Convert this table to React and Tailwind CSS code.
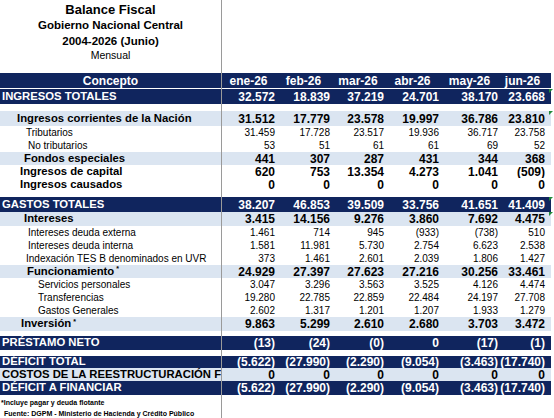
import React from "react";

const cols = [
  "w-[55px] pr-[2px]",
  "w-[55px] pr-[2px]",
  "w-[54px] pr-[2px]",
  "w-[55px] pr-[2px]",
  "w-[59px] pr-[2px]",
  "w-[51px] pr-[6px]",
];

const heads = ["ene-26", "feb-26", "mar-26", "abr-26", "may-26", "jun-26"];

const zeros = ["0", "0", "0", "0", "0", "0"];
const deficit = ["(5.622)", "(27.990)", "(2.290)", "(9.054)", "(3.463)", "(17.740)"];

const rows = [
  { k: "navy", label: "INGRESOS TOTALES", v: ["32.572", "18.839", "37.219", "24.701", "38.170", "23.668"], h: "h-[15px]", pad: "pl-[2px]", flag: true },
  { k: "gap", h: "h-[7px]" },
  { k: "light", label: "Ingresos corrientes de la Nación", v: ["31.512", "17.779", "23.578", "19.997", "36.786", "23.810"], h: "h-[15px]", pad: "pl-[17px]", flag: true },
  { k: "plain", label: "Tributarios", v: ["31.459", "17.728", "23.517", "19.936", "36.717", "23.758"], pad: "pl-[26px]" },
  { k: "plain", label: "No tributarios", v: ["53", "51", "61", "61", "69", "52"], pad: "pl-[28px]" },
  { k: "light", label: "Fondos especiales", v: ["441", "307", "287", "431", "344", "368"], pad: "pl-[24px]" },
  { k: "bold", label: "Ingresos de capital", v: ["620", "753", "13.354", "4.273", "1.041", "(509)"], pad: "pl-[20px]" },
  { k: "bold", label: "Ingresos causados", v: zeros, pad: "pl-[20px]" },
  { k: "gap", h: "h-[6px]" },
  { k: "navy", label: "GASTOS TOTALES", v: ["38.207", "46.853", "39.509", "33.756", "41.651", "41.409"], h: "h-[15px]", pad: "pl-[2px]", flag: true },
  { k: "light", label: "Intereses", v: ["3.415", "14.156", "9.276", "3.860", "7.692", "4.475"], h: "h-[14px]", pad: "pl-[24px]", flag: true },
  { k: "plain", label: "Intereses deuda externa", v: ["1.461", "714", "945", "(933)", "(738)", "510"], pad: "pl-[28px]" },
  { k: "plain", label: "Intereses deuda interna", v: ["1.581", "11.981", "5.730", "2.754", "6.623", "2.538"], pad: "pl-[28px]" },
  { k: "plain", label: "Indexación TES B denominados en UVR", v: ["373", "1.461", "2.601", "2.039", "1.806", "1.427"], pad: "pl-[26px]" },
  { k: "light", label: "Funcionamiento", sup: true, v: ["24.929", "27.397", "27.623", "27.216", "30.256", "33.461"], pad: "pl-[27px]" },
  { k: "plain", label: "Servicios personales", v: ["3.047", "3.296", "3.563", "3.525", "4.126", "4.474"], pad: "pl-[38px]" },
  { k: "plain", label: "Transferencias", v: ["19.280", "22.785", "22.859", "22.484", "24.197", "27.708"], pad: "pl-[38px]" },
  { k: "plain", label: "Gastos Generales", v: ["2.602", "1.317", "1.201", "1.207", "1.933", "1.279"], pad: "pl-[38px]" },
  { k: "light", label: "Inversión", sup: true, v: ["9.863", "5.299", "2.610", "2.680", "3.703", "3.472"], h: "h-[14px]", pad: "pl-[21px]" },
  { k: "gap", h: "h-[5px]" },
  { k: "navy", label: "PRÉSTAMO NETO", v: ["(13)", "(24)", "(0)", "0", "(17)", "(1)"], h: "h-[14px]", pad: "pl-[2px]" },
  { k: "gap", h: "h-[6px]" },
  { k: "navy", label: "DÉFICIT TOTAL", v: deficit, h: "h-[12px]", pad: "pl-[2px]" },
  { k: "light", label: "COSTOS DE LA REESTRUCTURACIÓN F", v: zeros, pad: "pl-[2px]" },
  { k: "navy", label: "DÉFICIT A FINANCIAR", v: deficit, h: "h-[14px]", pad: "pl-[2px]" },
];

const looks = {
  navy: "bg-[#10255e] text-white font-bold text-[12px]",
  light: "bg-[#dbe5f1] text-black font-bold text-[12px]",
  bold: "bg-white text-black font-bold text-[12px]",
  plain: "bg-white text-black text-[10px]",
};

function Row({ r }) {
  if (r.k === "gap") {
    return (
      <div className={`flex ${r.h}`}>
        <div className="w-[222px] border-r border-[#9a9a9a]" />
      </div>
    );
  }
  const lab = r.k === "plain" ? "text-[10px]" : "text-[11.3px]";
  return (
    <div className={`relative flex w-[551px] items-center ${r.h || "h-[13px]"} ${looks[r.k]}`}>
      <div className={`flex h-full w-[222px] items-center overflow-hidden whitespace-nowrap border-r border-[#9a9a9a] ${lab} ${r.pad}`}>
        {r.label}
        {r.sup && <span className="ml-[2px] -mt-[6px] text-[7px]">*</span>}
      </div>
      {r.v.map((n, i) => (
        <div key={i} className={`text-right ${cols[i]}`}>
          {n}
        </div>
      ))}
      {r.flag && (
        <div className="absolute left-[549px] top-0 h-0 w-0 border-t-[4px] border-r-[4px] border-t-[#1f8a3a] border-r-transparent" />
      )}
    </div>
  );
}

export default function App() {
  return (
    <div className="h-[418px] w-[554px] overflow-hidden bg-white font-['Liberation_Sans',Arial,sans-serif] leading-none text-black">
      {/* title */}
      <div className="flex h-[73px]">
        <div className="flex w-[222px] flex-col items-center border-r border-[#9a9a9a] pt-[3px]">
          <div className="text-[13px] font-bold">Balance Fiscal</div>
          <div className="mt-[4px] text-[11.5px] font-bold">Gobierno Nacional Central</div>
          <div className="mt-[4px] text-[11.5px] font-bold">2004-2026 (Junio)</div>
          <div className="mt-[3px] text-[10.5px]">Mensual</div>
        </div>
      </div>

      {/* header */}
      <div className="flex h-[15px] w-[551px] items-center bg-[#10255e] text-[12px] font-bold text-white">
        <div className="flex h-full w-[222px] items-center justify-center border-r border-[#9a9a9a]">
          Concepto
        </div>
        {heads.map((h, i) => (
          <div key={h} className={`text-center ${cols[i]}`}>
            {h}
          </div>
        ))}
      </div>
      <div className="flex h-[1px]">
        <div className="w-[222px] border-r border-[#9a9a9a]" />
      </div>

      {rows.map((r, i) => (
        <Row key={i} r={r} />
      ))}

      {/* notes */}
      <div className="flex h-[30px]">
        <div className="flex w-[222px] flex-col border-r border-[#9a9a9a] pt-[4px] text-[7px] font-bold">
          <div className="pl-[1px]">*Incluye pagar y deuda flotante</div>
          <div className="mt-[4px] pl-[4px]">Fuente: DGPM - Ministerio de Hacienda y Crédito Público</div>
        </div>
      </div>
    </div>
  );
}
